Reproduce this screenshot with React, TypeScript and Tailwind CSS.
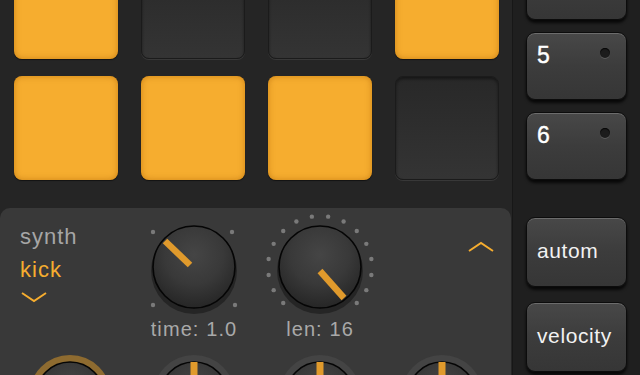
import type { ReactNode } from 'react'

const ORANGE = '#f6ad2f'
const IND = '#e09a2c'

function Pad({ on }: { on: boolean }) {
  return on ? (
    <div className="h-[104px] w-[104px] rounded-[8px] bg-[#f6ad2f] shadow-[inset_0_0_6px_rgba(170,95,0,0.55),0_1px_1px_rgba(0,0,0,0.5)]" />
  ) : (
    <div className="h-[104px] w-[104px] rounded-[8px] border border-[#1b1b1b] bg-linear-to-b from-[#282828] to-[#343434] shadow-[inset_0_2px_3px_rgba(0,0,0,0.45),0_1px_0_rgba(255,255,255,0.09)]" />
  )
}

function Face({ cx, cy, r, id }: { cx: number; cy: number; r: number; id: string }) {
  return (
    <>
      <defs>
        <radialGradient id={id} cx="50%" cy="35%" r="65%">
          <stop offset="0" stopColor="#454545" />
          <stop offset="0.55" stopColor="#393939" />
          <stop offset="1" stopColor="#262626" />
        </radialGradient>
      </defs>
      <circle cx={cx} cy={cy + 4} r={r + 2} fill="rgba(0,0,0,0.35)" />
      <circle cx={cx} cy={cy} r={r} fill={`url(#${id})`} stroke="#050505" strokeWidth="1.6" />
    </>
  )
}

function Dot({ x, y }: { x: number; y: number }) {
  return <circle cx={x} cy={y} r="2.2" fill="#7a7a7a" />
}

function KnobCol({ children, label }: { children: ReactNode; label: string }) {
  return (
    <div className="flex w-[126px] shrink-0 flex-col items-center">
      <svg width="126" height="110" viewBox="0 0 126 110">
        {children}
      </svg>
      <div className="text-[20px] leading-[22px] tracking-[1.1px] text-[#a9a9a9]">{label}</div>
    </div>
  )
}

function TimeKnob() {
  const cx = 63
  const cy = 59
  return (
    <KnobCol label="time: 1.0">
      <Dot x={cx - 41} y={cy - 35} />
      <Dot x={cx + 38} y={cy - 35} />
      <Dot x={cx - 41} y={cy + 38} />
      <Dot x={cx + 41} y={cy + 38} />
      <Face cx={cx} cy={cy} r={41} id="k1" />
      <line x1={cx - 4} y1={cy - 2} x2={cx - 29} y2={cy - 26} stroke={IND} strokeWidth="6.5" />
    </KnobCol>
  )
}

function LenKnob() {
  const cx = 63
  const cy = 59
  const dots = []
  for (let i = 0; i < 16; i++) {
    const a = ((-135 + i * 18) * Math.PI) / 180
    dots.push(<Dot key={i} x={cx + 52 * Math.sin(a)} y={cy - 51 * Math.cos(a)} />)
  }
  return (
    <KnobCol label="len: 16">
      {dots}
      <Face cx={cx} cy={cy} r={41} id="k2" />
      <line x1={cx} y1={cy + 4} x2={cx + 24} y2={cy + 31} stroke={IND} strokeWidth="6.5" />
    </KnobCol>
  )
}

function RingKnob({ ring, bar, id }: { ring: string; bar: boolean; id: string }) {
  return (
    <svg width="82" height="82" viewBox="0 0 82 82" className="shrink-0">
      <circle cx="41" cy="41" r="41" fill={ring} />
      <Face cx={41} cy={41} r={34} id={id} />
      {bar && <rect x="37.5" y="7" width="7" height="30" fill={IND} />}
    </svg>
  )
}

function SideButton({ children, led, h = 68 }: { children?: ReactNode; led?: boolean; h?: number }) {
  return (
    <div
      className={`relative w-[101px] shrink-0 rounded-[9px] border border-[#0c0c0c] bg-linear-to-b from-[#484848] via-[#3c3c3c] to-[#363636] shadow-[inset_0_1px_0_rgba(255,255,255,0.2),0_3px_3px_rgba(0,0,0,0.75)] ${h === 68 ? 'h-[68px]' : 'h-[70px]'}`}
    >
      {children}
      {led && (
        <div className="absolute right-[16px] top-[15px] h-[10px] w-[10px] rounded-full bg-[#1c1c1c] shadow-[inset_0_1px_1px_rgba(0,0,0,0.9),0_1px_0_rgba(255,255,255,0.15)]" />
      )}
    </div>
  )
}

function Num({ n }: { n: string }) {
  return <div className="pl-[10px] pt-[11px] text-[23px] leading-[23px] text-white [-webkit-text-stroke:0.4px_white]">{n}</div>
}

function Word({ w }: { w: string }) {
  return <div className="flex h-full items-center pl-[10px] pb-[2px] text-[21px] tracking-[0.6px] text-[#f2f2f2]">{w}</div>
}

export default function App() {
  const pads = [true, false, false, true, true, true, true, false]
  return (
    <div className="flex h-[375px] w-[640px] overflow-hidden bg-[#252525] font-['Liberation_Sans',Arial,sans-serif]">
      <div className="flex w-[512px] shrink-0 flex-col">
        <div className="-mt-[45px] grid grid-cols-[repeat(4,104px)] gap-x-[23px] gap-y-[17px] pl-[14px]">
          {pads.map((p, i) => (
            <Pad key={i} on={p} />
          ))}
        </div>

        <div className="mt-[28px] h-[200px] w-[511px] shrink-0 rounded-t-[10px] bg-[#393939]">
          <div className="flex h-[132px]">
            <div className="w-[131px] shrink-0 pl-[20px] pt-[12px] text-[22px] leading-[33px] tracking-[1px]">
              <div className="text-[#a6a6a6]">synth</div>
              <div style={{ color: ORANGE }}>kick</div>
              <svg width="28" height="12" viewBox="0 0 28 12" className="mt-[5px]">
                <path d="M2 2 L14 10 L26 2" fill="none" stroke={ORANGE} strokeWidth="2" />
              </svg>
            </div>
            <TimeKnob />
            <LenKnob />
            <svg width="28" height="12" viewBox="0 0 28 12" className="ml-[84px] mt-[33px]">
              <path d="M2 10 L14 2 L26 10" fill="none" stroke={ORANGE} strokeWidth="2" />
            </svg>
          </div>
          <div className="mt-[15px] flex pl-[29px]">
            <RingKnob ring="#8e6b30" bar={false} id="r1" />
            <div className="ml-[42px]">
              <RingKnob ring="#444444" bar id="r2" />
            </div>
            <div className="ml-[44px]">
              <RingKnob ring="#444444" bar id="r3" />
            </div>
            <div className="ml-[40px]">
              <RingKnob ring="#444444" bar id="r4" />
            </div>
          </div>
        </div>
      </div>

      <div className="w-[128px] shrink-0 border-l border-[#171717] bg-[#1f1f1f] pl-[13px]">
        <div className="-mt-[48px] flex flex-col gap-[12px]">
          <SideButton />
          <SideButton led>
            <Num n="5" />
          </SideButton>
          <SideButton led>
            <Num n="6" />
          </SideButton>
          <div className="mt-[25px]">
            <SideButton h={70}>
              <Word w="autom" />
            </SideButton>
          </div>
          <div className="mt-[3px]">
            <SideButton h={70}>
              <Word w="velocity" />
            </SideButton>
          </div>
        </div>
      </div>
    </div>
  )
}
